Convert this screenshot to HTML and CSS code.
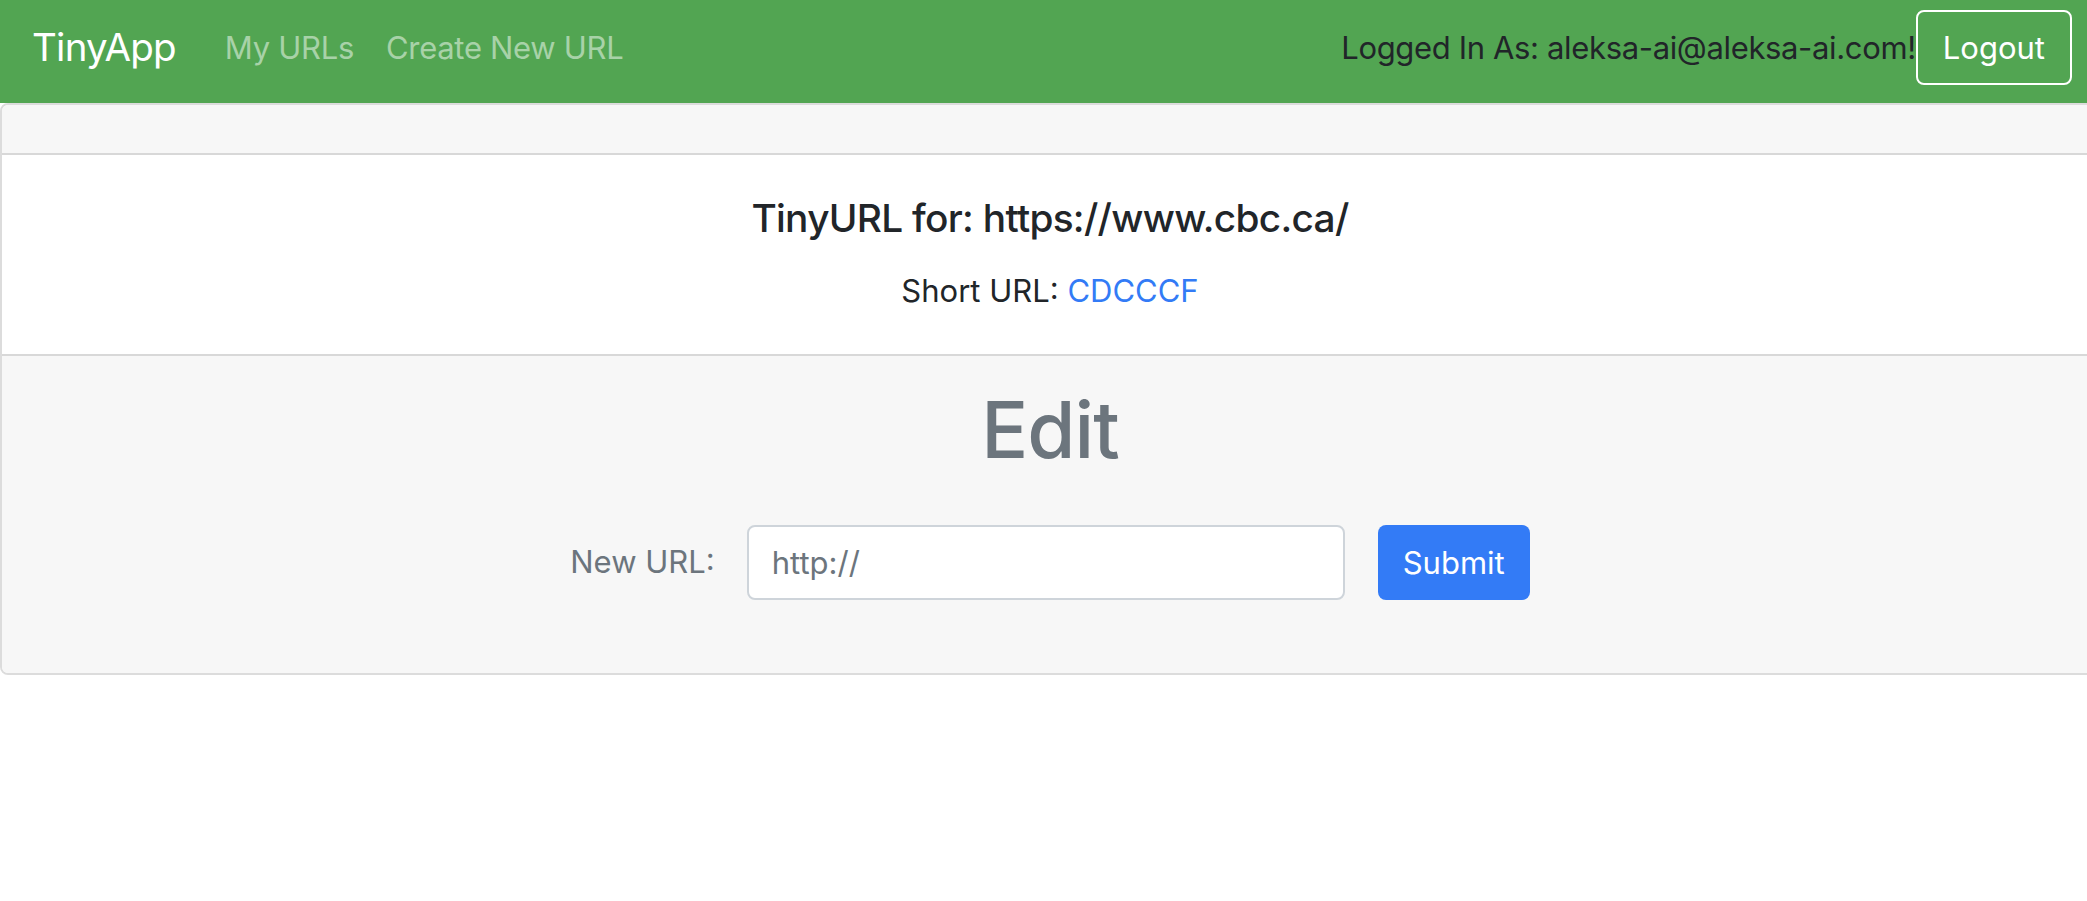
FILE: index.html
```html
<!DOCTYPE html>
<html lang="en">
<head>
<meta charset="utf-8">
<title>TinyApp</title>
<link rel="stylesheet" href="styles.css">
</head>
<body>
<nav class="navbar">
  <a class="brand" href="#">TinyApp</a>
  <ul class="nav-links">
    <li><a class="nav-link" href="#">My URLs</a></li>
    <li><a class="nav-link" href="#">Create New URL</a></li>
  </ul>
  <div class="user">
    <span class="user-label">Logged In As: aleksa-ai@aleksa-ai.com!</span>
    <button class="btn btn-logout" type="button">Logout</button>
  </div>
</nav>
<main class="card">
  <div class="card-header"></div>
  <div class="card-body">
    <h5 class="card-title">TinyURL for: https://www.cbc.ca/</h5>
    <p class="short-url">Short URL: <a class="short-link" href="#">CDCCCF</a></p>
  </div>
  <div class="card-footer">
    <h1 class="edit-title">Edit</h1>
    <form class="edit-form">
      <label class="edit-label" for="longURL">New URL:</label>
      <input class="edit-input" id="longURL" type="text" placeholder="http://">
      <button class="btn btn-submit" type="button">Submit</button>
    </form>
  </div>
</main>
</body>
</html>
```

FILE: styles.css
```css
* {
  box-sizing: border-box;
}

html, body {
  margin: 0;
  padding: 0;
  overflow: hidden;
  background: #ffffff;
}

body {
  font-family: Inter, "Liberation Sans", sans-serif;
  font-size: 31px;
  line-height: 1.5;
  color: #212529;
}

/* Navbar */
.navbar {
  display: flex;
  align-items: center;
  height: 103px;
  padding: 10px 15px 18px 32px;
  background: #52a552;
}

.brand {
  font-size: 38.5px;
  line-height: 1.2;
  letter-spacing: -0.75px;
  color: #ffffff;
  text-decoration: none;
  margin-right: 33px;
}

.nav-links {
  display: flex;
  list-style: none;
  margin: 0;
  padding: 0;
}

.nav-link {
  display: block;
  padding: 0 16px;
  color: #a8d2a8;
  text-decoration: none;
  line-height: 1.2;
  letter-spacing: -0.3px;
}

.user {
  margin-left: auto;
  display: flex;
  align-items: center;
}

.user-label {
  color: #212529;
  line-height: 1.2;
  letter-spacing: -0.35px;
}

.btn {
  font-family: inherit;
  font-size: 31px;
  line-height: 1;
  height: 75px;
  padding: 0 25px;
  border-radius: 8px;
  cursor: pointer;
}

.btn-logout {
  background: transparent;
  color: #ffffff;
  border: 2px solid #ffffff;
}

/* Card */
.card {
  width: 2100px;
  border: 2px solid #dcdcdc;
  border-radius: 8px;
  overflow: hidden;
  background: #ffffff;
}

.card-header {
  height: 50px;
  background: #f7f7f7;
  border-bottom: 2px solid #d8d8d8;
}

.card-body {
  padding: 40px 20px;
  text-align: center;
}

.card-title {
  margin: 0 0 26px;
  font-size: 38.8px;
  font-weight: 500;
  line-height: 1.2;
  letter-spacing: -0.7px;
  color: #212529;
}

.short-url {
  margin: 0;
  line-height: 1.5;
}

.short-link {
  color: #337bf6;
  text-decoration: none;
}

.card-footer {
  background: #f7f7f7;
  border-top: 2px solid #d8d8d8;
  padding: 27px 20px 73px;
  text-align: center;
}

.edit-title {
  margin: 0 0 48px;
  font-size: 78px;
  font-weight: 500;
  line-height: 1.2;
  letter-spacing: -1px;
  color: #6c757d;
}

.edit-form {
  display: flex;
  justify-content: center;
  align-items: center;
}

.edit-label {
  color: #6c757d;
  margin-right: 32px;
}

.edit-input {
  width: 598px;
  height: 75px;
  padding: 0 23px;
  font-family: inherit;
  font-size: 31px;
  color: #495057;
  background: #ffffff;
  border: 2px solid #ced4da;
  border-radius: 8px;
  margin-right: 33px;
}

.edit-input::placeholder {
  color: #6c757d;
  opacity: 1;
}

.btn-submit {
  background: #337bf6;
  color: #ffffff;
  border: none;
}
```
